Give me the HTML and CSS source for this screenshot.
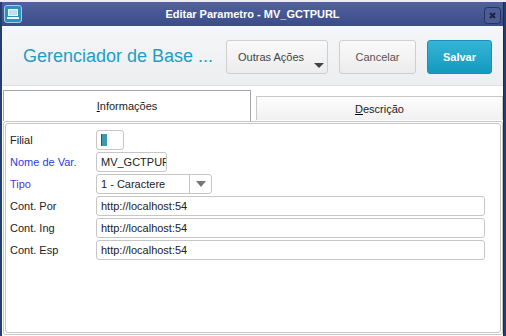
FILE: index.html
```html
<!DOCTYPE html>
<html lang="pt-BR">
<head>
    <meta charset="UTF-8">
    <meta name="viewport" content="width=device-width, initial-scale=1.0">
    <title>Editar Parametro - MV_GCTPURL</title>
    <link rel="stylesheet" href="styles.css">
</head>
<body>
    <div class="window">
        <div class="titlebar">
            <svg class="app-icon" width="18" height="18" viewBox="0 0 18 18">
                <rect x="0.5" y="0.5" width="17" height="17" rx="2.5" fill="#2d91b9" stroke="#a3cde0"/>
                <rect x="4" y="4" width="10" height="7" rx="0.5" fill="#eef7fb"/>
                <rect x="5" y="5" width="8" height="5" fill="#bfe0ee"/>
                <rect x="3" y="12" width="12" height="2" rx="0.5" fill="#eef7fb"/>
            </svg>
            <span class="title">Editar Parametro - MV_GCTPURL</span>
            <svg class="close" width="17" height="17" viewBox="0 0 17 17">
                <rect x="0.5" y="0.5" width="16" height="16" rx="3" fill="#4b5c97" stroke="#27335f"/>
                <path d="M6 6 L11 11 M11 6 L6 11" stroke="#1c2443" stroke-width="2"/>
            </svg>
        </div>

        <div class="header">
            <h1>Gerenciador de Base ...</h1>
            <button class="btn btn-more">Outras Ações<span class="caret"></span></button>
            <button class="btn btn-cancel">Cancelar</button>
            <button class="btn btn-primary">Salvar</button>
        </div>

        <div class="tabs">
            <div class="tab active"><u>I</u>nformações</div>
            <div class="tab"><u>D</u>escrição</div>
        </div>

        <div class="panel">
            <div class="panel-inner">
                <div class="form-row">
                    <label>Filial</label>
                    <div class="field field-filial"><span class="cursor"></span></div>
                </div>
                <div class="form-row">
                    <label class="required">Nome de Var.</label>
                    <div class="field field-name">MV_GCTPURL</div>
                </div>
                <div class="form-row">
                    <label class="required-alt">Tipo</label>
                    <div class="field field-select">
                        <span class="select-value">1 - Caractere</span>
                        <span class="select-arrow"></span>
                    </div>
                </div>
                <div class="form-row">
                    <label>Cont. Por</label>
                    <div class="field field-wide">http://localhost:54</div>
                </div>
                <div class="form-row">
                    <label>Cont. Ing</label>
                    <div class="field field-wide">http://localhost:54</div>
                </div>
                <div class="form-row">
                    <label>Cont. Esp</label>
                    <div class="field field-wide">http://localhost:54</div>
                </div>
            </div>
        </div>
    </div>
</body>
</html>
```

FILE: styles.css
```css
* {
    box-sizing: border-box;
    margin: 0;
    padding: 0;
}

body {
    width: 506px;
    height: 336px;
    overflow: hidden;
    background: linear-gradient(#ececec 0, #ececec 2px, #21406d 2px);
    font-family: "Liberation Sans", Arial, sans-serif;
    font-size: 11px;
    color: #222;
}

.window {
    margin: 2px 0 0 2px;
    width: 502px;
    height: 334px;
    background-color: #fff;
    border-right: 1px solid #172b55;
    display: flex;
    flex-direction: column;
}

.titlebar {
    flex: none;
    height: 24px;
    padding: 0 2px;
    background: linear-gradient(#50619d, #3c4c88);
    display: grid;
    grid-template-columns: 1fr auto 1fr;
    align-items: center;
}

.app-icon {
    display: block;
    justify-self: start;
}

.title {
    color: #fff;
    font-weight: bold;
    font-size: 11px;
}

.close {
    display: block;
    justify-self: end;
    margin-top: 2px;
}

.header {
    flex: none;
    height: 60px;
    padding: 2px 11px 0 21px;
    background: linear-gradient(#f5f6f7, #eceef0);
    border-bottom: 1px solid #dedede;
    display: flex;
    align-items: center;
    gap: 11px;
}

.header h1 {
    flex: 1;
    font-size: 18px;
    font-weight: normal;
    color: #1f9dc6;
}

.btn {
    height: 34px;
    border: 1px solid #cfcfcf;
    border-radius: 3px;
    background: linear-gradient(#fafafa, #ececec);
    font-family: "Liberation Sans", Arial, sans-serif;
    font-size: 11px;
    color: #555;
}

.btn-more {
    width: 102px;
    text-align: left;
    padding-left: 11px;
    color: #444;
    position: relative;
}

.caret {
    position: absolute;
    right: 3px;
    bottom: 5px;
    width: 0;
    height: 0;
    border-left: 5px solid transparent;
    border-right: 5px solid transparent;
    border-top: 5px solid #444;
}

.btn-cancel {
    width: 77px;
}

.btn-primary {
    width: 65px;
    background: linear-gradient(#36b5d5, #1399bf);
    border-color: #1592b6;
    color: #fff;
    font-weight: bold;
}

.tabs {
    flex: none;
    height: 35px;
    padding-top: 4px;
    display: flex;
    align-items: flex-start;
}

.tab {
    margin-left: 5px;
    width: 247px;
    height: 24px;
    margin-top: 6px;
    border: 1px solid #c8c8c8;
    border-bottom: none;
    background: linear-gradient(#fdfdfd, #f1f1f1);
    display: flex;
    align-items: center;
    justify-content: center;
    color: #222;
}

.tab.active {
    margin-left: 1px;
    margin-top: 0;
    width: 248px;
    height: 31px;
    border-color: #a6a6a6;
    background: #fff;
}

.tab u {
    text-decoration-color: #000;
}

.panel {
    flex: 1;
    margin: 0 0 1px 1px;
    width: 500px;
    border: 1px solid #c6c6c6;
    border-radius: 3px;
    padding: 1px;
    display: flex;
}

.panel-inner {
    flex: 1;
    border: 1px solid #c6c6c6;
    border-radius: 3px;
    padding: 6px 0 0 4px;
}

.form-row {
    display: flex;
    align-items: center;
    height: 20px;
    margin-bottom: 2px;
}

.form-row label {
    width: 86px;
    flex: none;
}

.form-row label.required {
    color: #2b3ce4;
}

.form-row label.required-alt {
    color: #5a32d6;
}

.field {
    height: 20px;
    border: 1px solid #c6c6c6;
    border-radius: 3px;
    padding-left: 4px;
    display: flex;
    align-items: center;
    white-space: nowrap;
    overflow: hidden;
    color: #222;
}

.field-filial {
    width: 28px;
}

.cursor {
    width: 6px;
    height: 12px;
    background-color: #3a9bb0;
    border-left: 1px solid #7a3b3b;
}

.field-name {
    width: 71px;
}

.field-select {
    width: 116px;
    padding-left: 0;
}

.select-value {
    flex: 1;
    padding-left: 4px;
}

.select-arrow {
    width: 22px;
    height: 100%;
    border-left: 1px solid #c6c6c6;
    display: flex;
    align-items: center;
    justify-content: center;
}

.select-arrow::after {
    content: "";
    width: 0;
    height: 0;
    border-left: 5px solid transparent;
    border-right: 5px solid transparent;
    border-top: 6px solid #777;
}

.field-wide {
    width: 389px;
}
```
